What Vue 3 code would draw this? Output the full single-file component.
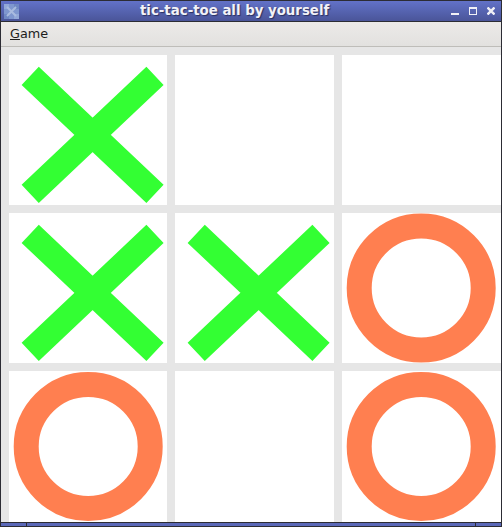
<template>
  <div class="window">
    <div class="titlebar">
      <svg class="app-icon" width="15" height="15" viewBox="0 0 15 15">
        <rect width="15" height="15" fill="#7f97cf" />
        <rect x="0" y="0" width="5" height="5" fill="#92a8d8" />
        <rect x="10" y="0" width="5" height="5" fill="#6f88c4" />
        <rect x="0" y="10" width="5" height="5" fill="#6f88c4" />
        <rect x="10" y="10" width="5" height="5" fill="#92a8d8" />
        <path d="M3 3L12 12M12 3L3 12" stroke="#a9bbdf" stroke-width="2" />
      </svg>
      <span class="title">tic-tac-toe all by yourself</span>
      <div class="controls">
        <svg width="8" height="8" viewBox="0 0 8 8"><rect x="0" y="6" width="8" height="2" fill="#f0f0f6" /></svg>
        <svg width="8" height="8" viewBox="0 0 8 8"><rect x="0.500" y="0.500" width="7" height="7" fill="none" stroke="#f0f0f6" /><rect x="0" y="0" width="8" height="2" fill="#f0f0f6" /></svg>
        <svg width="8" height="8" viewBox="0 0 8 8"><path d="M0.500 0.500L7.500 7.500M7.500 0.500L0.500 7.500" stroke="#f0f0f6" stroke-width="2.400" /></svg>
      </div>
    </div>
    <div class="menubar">
      <span class="menu-item"><u>G</u>ame</span>
    </div>
    <div class="board">
      <div class="cell" v-for="(mark, i) in cells" :key="i">
        <svg v-if="mark === 'x'" class="mark" viewBox="0 0 158 150">
          <path d="M21.200 20.900L146 138.800M146 20.900L21.200 138.800" fill="none" stroke="#33ff33" stroke-width="25" />
        </svg>
        <svg v-if="mark === 'o'" class="mark" viewBox="0 0 158 150">
          <circle cx="79.200" :cy="i > 5 ? 75.500 : 75" r="62" fill="none" stroke="#ff7f50" stroke-width="25" />
        </svg>
      </div>
    </div>
    <div class="statusbar">
      <div class="grip"></div>
      <div class="strip"></div>
      <div class="grip"></div>
    </div>
  </div>
</template>

<script setup>
const cells = ['x', '', '', 'x', 'x', 'o', 'o', '', 'o']
</script>

<style>
html,
body {
  margin: 0;
  background: #e6e6e6;
  overflow: hidden;
}
</style>

<style scoped>
.window {
  width: 502px;
  height: 527px;
  box-sizing: border-box;
  display: flex;
  flex-direction: column;
  background: #e6e6e6;
  border-left: 1px solid #2c2c34;
  border-right: 1px solid #2c2c34;
}

.titlebar {
  height: 22px;
  box-sizing: border-box;
  flex: none;
  display: flex;
  align-items: center;
  padding: 0 6px 0 3px;
  background: linear-gradient(#6272c8, #4a5599);
  border-top: 1px solid #2c2c34;
  border-bottom: 1px solid #2c2c34;
}

.app-icon {
  flex: none;
}

.title {
  margin-left: 121px;
  font: bold 13.330px/18px "DejaVu Sans", sans-serif;
  color: #f2f2f8;
  text-shadow: 1px 1px 1px #2a3060;
  white-space: nowrap;
}

.controls {
  margin-left: auto;
  display: flex;
  align-items: center;
  gap: 10px;
}

.menubar {
  height: 25px;
  box-sizing: border-box;
  flex: none;
  display: flex;
  align-items: center;
  padding-left: 9px;
  background: linear-gradient(#eceae8, #e2e1df);
  border-bottom: 1px solid #bebdb9;
}

.menu-item {
  font: 12.800px/16px "DejaVu Sans", sans-serif;
  color: #1c1c1c;
}

.board {
  flex: none;
  height: 475px;
  box-sizing: border-box;
  padding: 8px 0 0 8px;
  display: grid;
  grid-template-columns: 158px 159px 159px;
  grid-template-rows: 150px 150px 151px;
  gap: 8px;
}

.cell {
  background: #fff;
  overflow: hidden;
}

.mark {
  display: block;
  width: 158px;
  height: 150px;
}

.statusbar {
  flex: none;
  height: 5px;
  box-sizing: border-box;
  display: flex;
  background: #2c2c34;
  gap: 1px;
  padding: 1px 0;
}

.grip {
  width: 25px;
  background: #5a68b8;
}

.strip {
  flex: 1;
  background: #5a68b8;
}
</style>
